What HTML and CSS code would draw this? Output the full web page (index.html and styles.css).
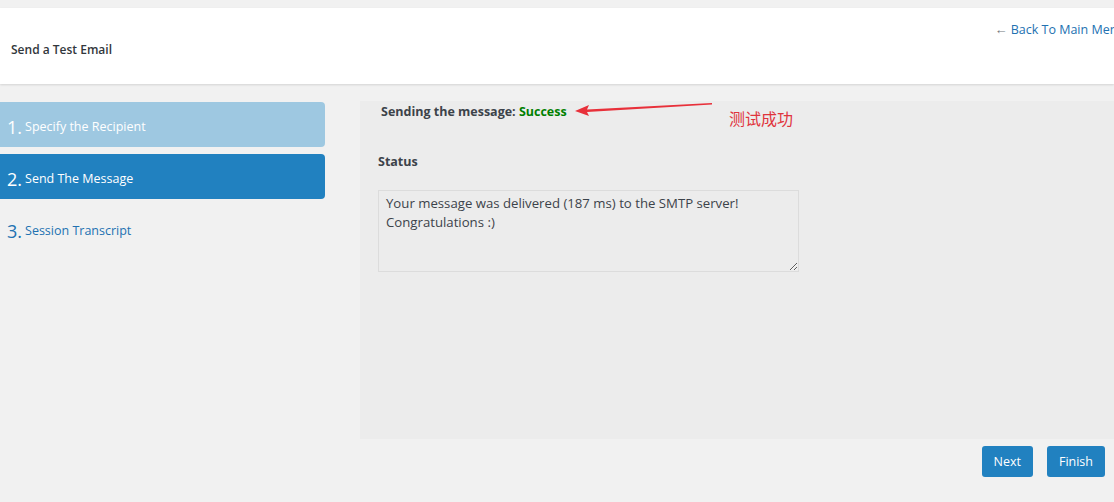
FILE: index.html
```html
<!DOCTYPE html>
<html lang="en">
<head>
<meta charset="UTF-8" />
<meta name="viewport" content="width=device-width, initial-scale=1" />
<title>Send a Test Email</title>
<link rel="stylesheet" href="styles.css">
</head>
<body>
  <header class="page-header">
    <h1 class="page-title">Send a Test Email</h1>
    <a class="back-link" href="#"><span class="back-arrow">&larr;</span> Back To Main Menu</a>
  </header>

  <div class="wizard">
    <ul class="steps">
      <li class="step done"><span class="num">1.</span> Specify the Recipient</li>
      <li class="step current"><span class="num">2.</span> Send The Message</li>
      <li class="step"><span class="num">3.</span> Session Transcript</li>
    </ul>

    <div class="panel-wrap">
      <section class="panel">
        <p class="result">Sending the message: <span class="ok">Success</span></p>
        <label class="status-label" for="status">Status</label>
        <textarea id="status" class="status-box" readonly>Your message was delivered (187 ms) to the SMTP server! Congratulations :)</textarea>

        <!-- annotation -->
        <svg class="note-arrow" width="140" height="16" viewBox="0 0 140 16">
          <polygon points="0,9 14,3 12,7.5 137,1 137,2.5 12,10 14,14" fill="#e8303a"/>
        </svg>
        <span class="note-text">测试成功</span>
      </section>

      <div class="actions">
        <button class="btn">Next</button>
        <button class="btn">Finish</button>
      </div>
    </div>
  </div>
</body>
</html>
```

FILE: styles.css
```css
:root {
  --blue: #2181c0;
  --blue-light: #9ec8e1;
  --link: #2271b1;
  --bg: #f1f1f1;
  --panel: #ececec;
  --text: #3c434a;
}
* {
  box-sizing: border-box;
}
body {
  margin: 0;
  background: var(--bg);
  font-family: "Open Sans", "Noto Sans", sans-serif;
  color: var(--text);
  overflow: hidden;
}
.page-header {
  margin-top: 8px;
  height: 76px;
  background: #fff;
  box-shadow: 0 1px 2px rgba(0, 0, 0, 0.12);
  display: flex;
  justify-content: space-between;
  align-items: flex-start;
  white-space: nowrap;
}
.page-title {
  margin: 33px 0 0 11px;
  font-size: 12px;
  font-weight: 600;
  color: #32373c;
}
.back-link {
  margin: 12px -11px 0 0;
  font-size: 12.5px;
  color: var(--link);
  text-decoration: none;
}
.back-arrow {
  color: #72777c;
  font-size: 13px;
}
.wizard {
  display: flex;
  align-items: flex-start;
  margin-top: 17px;
}
.steps {
  list-style: none;
  margin: 1px 0 0;
  padding: 0;
  width: 325px;
  flex: none;
  display: flex;
  flex-direction: column;
  gap: 7px;
}
.step {
  height: 45px;
  display: flex;
  align-items: center;
  gap: 3px;
  padding: 4px 7px 0;
  border-radius: 0 4px 4px 0;
  font-size: 12.5px;
  color: var(--link);
}
.step .num {
  font-size: 18px;
  line-height: 1;
  color: var(--link);
  font-weight: 400;
}
.step.done {
  background: var(--blue-light);
  color: #fff;
}
.step.done .num,
.step.current .num {
  color: #fff;
}
.step.current {
  background: var(--blue);
  color: #fff;
}
.panel-wrap {
  margin-left: 35px;
  flex: 1;
  display: flex;
  flex-direction: column;
}
.panel {
  position: relative;
  background: var(--panel);
  height: 338px;
  padding: 1px 18px;
}
.result {
  margin: 1px 0 0 3px;
  font-size: 12.5px;
  font-weight: 700;
  line-height: 18px;
}
.ok {
  color: #008000;
}
.status-label {
  display: block;
  margin-top: 32px;
  font-size: 12.5px;
  font-weight: 700;
  line-height: 18px;
}
.status-box {
  display: block;
  margin-top: 19px;
  width: 421px;
  height: 82px;
  padding: 3px 7px;
  border: 1px solid #dcdcdc;
  background: #ececec;
  font-family: "Open Sans", "Noto Sans", sans-serif;
  font-size: 13.2px;
  line-height: 19px;
  color: #3c434a;
  resize: vertical;
}
.note-arrow {
  position: absolute;
  left: 215px;
  top: 1px;
}
.note-text {
  position: absolute;
  left: 369px;
  top: 5px;
  font-family: "Noto Sans CJK SC", sans-serif;
  font-size: 16px;
  color: #e0343c;
}
.actions {
  display: flex;
  justify-content: flex-end;
  gap: 14px;
  padding: 7px 9px 0 0;
}
.btn {
  background: var(--blue);
  color: #fff;
  border: none;
  border-radius: 3px;
  height: 31px;
  padding: 0 12px;
  font-family: "Open Sans", "Noto Sans", sans-serif;
  font-size: 12.5px;
}
```
